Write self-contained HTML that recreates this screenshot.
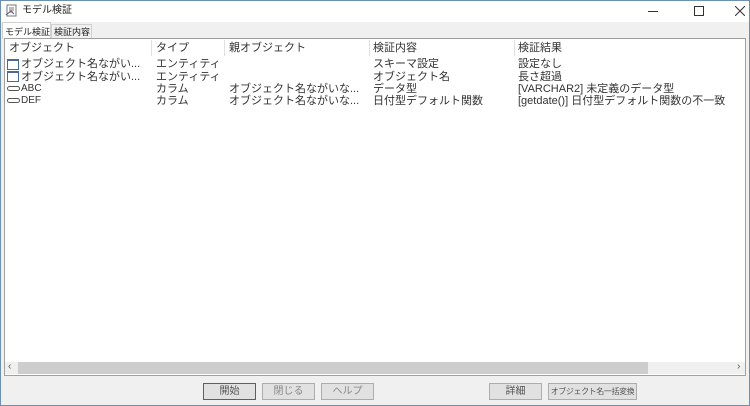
<!DOCTYPE html>
<html><head><meta charset="utf-8"><style>
*{margin:0;padding:0;box-sizing:border-box}
html,body{width:750px;height:406px;overflow:hidden}
body{background:#f0f0f0;font-family:"Liberation Sans","Noto Sans CJK JP",sans-serif;font-size:11px;line-height:12px;color:#222;position:relative}
.a{position:absolute;white-space:nowrap}
.title{left:0;top:0;width:750px;height:22px;background:#fff}
.list{left:4px;top:38px;width:742px;height:338px;background:#fff;border:1px solid #a0a0a0}
.hd{top:42px;color:#333}
.sep{position:absolute;top:40px;width:1px;height:16px;background:#e0e0e0}
.btn{position:absolute;top:383px;height:17px;border:1px solid #adadad;background:#e1e1e1;color:#888;font-size:10px;text-align:center;line-height:15px;white-space:nowrap;overflow:hidden}
.r{color:#333}
.frame{left:0;top:0;width:750px;height:406px;border:1px solid #6d8fb0;pointer-events:none}
</style></head><body>
<div class="a title"></div>
<svg class="a" style="left:5px;top:4px" width="14" height="14"><rect x="2" y="1" width="9" height="11" fill="#fff" stroke="#777"/><path d="M4 4h5M4 6h5M4 8h4" stroke="#777"/><path d="M1 11l5-4 3 3" stroke="#557" fill="none"/></svg>
<div class="a" style="left:22px;top:5px;font-size:10px">モデル検証</div>
<div class="a" style="left:648px;top:11px;width:10px;height:1px;background:#333"></div>
<div class="a" style="left:694px;top:6px;width:10px;height:10px;border:1px solid #333"></div>
<svg class="a" style="left:735px;top:6px" width="10" height="10"><path d="M0 0L10 10M10 0L0 10" stroke="#333" stroke-width="1"/></svg>
<div class="a" style="left:2px;top:22px;width:49px;height:17px;background:#fff;border:1px solid #d0d0d0;border-bottom:none"></div>
<div class="a" style="left:5px;top:26px;font-size:9px">モデル検証</div>
<div class="a" style="left:51px;top:24px;width:41px;height:14px;border:1px solid #d0d0d0;border-bottom:none"></div>
<div class="a" style="left:54px;top:26px;font-size:9px">検証内容</div>
<div class="a list"></div>
<div class="sep" style="left:151px"></div><div class="sep" style="left:224px"></div><div class="sep" style="left:369px"></div><div class="sep" style="left:514px"></div>
<div class="a hd" style="left:9px">オブジェクト</div>
<div class="a hd" style="left:156px">タイプ</div>
<div class="a hd" style="left:229px">親オブジェクト</div>
<div class="a hd" style="left:373px">検証内容</div>
<div class="a hd" style="left:518px">検証結果</div>
<div class="a" style="left:7px;top:59px;width:12px;height:11px;border:1px solid #4a6a96;border-top-width:2px"></div>
<div class="a" style="left:7px;top:71px;width:12px;height:11px;border:1px solid #4a6a96;border-top-width:2px"></div>
<div class="a" style="left:7px;top:86px;width:13px;height:5px;border:1px solid #555;border-radius:3px"></div>
<div class="a" style="left:7px;top:98px;width:13px;height:5px;border:1px solid #555;border-radius:3px"></div>
<div class="a r" style="left:21px;top:58px">オブジェクト名ながい...</div>
<div class="a r" style="left:21px;top:71px">オブジェクト名ながい...</div>
<div class="a r" style="left:21px;top:83px;font-size:10px">ABC</div>
<div class="a r" style="left:21px;top:95px;font-size:10px">DEF</div>
<div class="a r" style="left:156px;top:58px">エンティティ</div>
<div class="a r" style="left:156px;top:71px">エンティティ</div>
<div class="a r" style="left:156px;top:83px">カラム</div>
<div class="a r" style="left:156px;top:95px">カラム</div>
<div class="a r" style="left:229px;top:83px">オブジェクト名ながいな...</div>
<div class="a r" style="left:229px;top:95px">オブジェクト名ながいな...</div>
<div class="a r" style="left:373px;top:58px">スキーマ設定</div>
<div class="a r" style="left:373px;top:71px">オブジェクト名</div>
<div class="a r" style="left:373px;top:83px">データ型</div>
<div class="a r" style="left:373px;top:95px">日付型デフォルト関数</div>
<div class="a r" style="left:518px;top:58px">設定なし</div>
<div class="a r" style="left:518px;top:71px">長さ超過</div>
<div class="a r" style="left:518px;top:83px">[VARCHAR2] 未定義のデータ型</div>
<div class="a r" style="left:518px;top:95px">[getdate()] 日付型デフォルト関数の不一致</div>
<div class="a" style="left:5px;top:362px;width:740px;height:12px;background:#f0f0f0"></div>
<div class="a" style="left:18px;top:362px;width:630px;height:12px;background:#cdcdcd"></div>
<div class="a" style="left:8px;top:361px;font-size:10px;color:#555">‹</div>
<div class="a" style="left:737px;top:361px;font-size:10px;color:#555">›</div>
<div class="btn" style="left:203px;width:53px;border:1px solid #0078d7;color:#555">開始</div>
<div class="btn" style="left:262px;width:53px">閉じる</div>
<div class="btn" style="left:321px;width:53px">ヘルプ</div>
<div class="btn" style="left:489px;width:53px;color:#555">詳細</div>
<div class="btn" style="left:548px;width:89px;color:#555;font-size:8px;letter-spacing:-0.4px">オブジェクト名一括変換</div>
<div class="a frame"></div>
</body></html>
